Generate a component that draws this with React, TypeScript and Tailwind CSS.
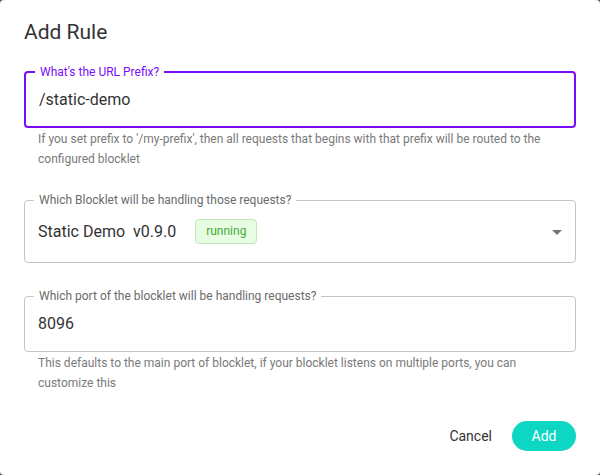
import React from 'react';

const font = { fontFamily: 'Roboto, "Liberation Sans", Arial, sans-serif' };

function Field({
  label,
  focused,
  height,
  children,
}: {
  label: string;
  focused?: boolean;
  height: string;
  children: React.ReactNode;
}) {
  return (
    <div
      className={`relative flex items-center rounded-[4px] px-[13px] ${height} ${
        focused ? 'border-2 border-[#7b0cf7]' : 'border border-[#c4c4c4]'
      }`}
    >
      <span
        className={`absolute left-[9px] top-[-9px] bg-white px-[5px] text-[12px] leading-[16px] ${
          focused ? 'text-[#7b0cf7]' : 'text-[#6b6b6b]'
        }`}
      >
        {label}
      </span>
      {children}
    </div>
  );
}

function Helper({ children }: { children: React.ReactNode }) {
  return <p className="mt-[2px] px-[14px] text-[12px] leading-[19.5px] text-[#7a7a7a]">{children}</p>;
}

export default function App() {
  return (
    <div className="h-[475px] w-[600px] bg-[#555]" style={font}>
      <div className="flex h-full w-full flex-col rounded-[4px] bg-white">
        <h2 className="px-6 pt-4 text-[21px] leading-[32px] text-[#333]">Add Rule</h2>

        <div className="mt-[23px] px-6">
          <Field label="What's the URL Prefix?" focused height="h-[57px]">
            <span className="text-[16px] text-[#333]">/static-demo</span>
          </Field>
          <Helper>
            If you set prefix to '/my-prefix', then all requests that begins with that prefix will be routed to the
            configured blocklet
          </Helper>

          <div className="mt-[31px]">
            <Field label="Which Blocklet will be handling those requests?" height="h-[63px]">
              <span className="whitespace-pre text-[16px] text-[#333]">Static Demo  v0.9.0</span>
              <span className="ml-[19px] rounded-[4px] border border-[#c3e6bc] bg-[#e7fde2] px-[10px] text-[12px] leading-[23px] text-[#46a93c]">
                running
              </span>
              <svg className="absolute right-[13px] top-[29px]" width="10" height="5" viewBox="0 0 10 5">
                <path d="M0 0l5 5 5-5z" fill="#757575" />
              </svg>
            </Field>
          </div>

          <div className="mt-[33px]">
            <Field label="Which port of the blocklet will be handling requests?" height="h-[56px]">
              <span className="text-[16px] text-[#333]">8096</span>
            </Field>
          </div>
          <Helper>
            This defaults to the main port of blocklet, if your blocklet listens on multiple ports, you can customize
            this
          </Helper>
        </div>

        <div className="mt-[28px] flex items-center justify-end gap-[12px] px-6">
          <button className="h-[30px] px-[8px] text-[14px] text-[#333]">Cancel</button>
          <button className="h-[30px] w-[64px] rounded-full bg-[#0dd6c3] text-[14px] text-white">Add</button>
        </div>
      </div>
    </div>
  );
}
